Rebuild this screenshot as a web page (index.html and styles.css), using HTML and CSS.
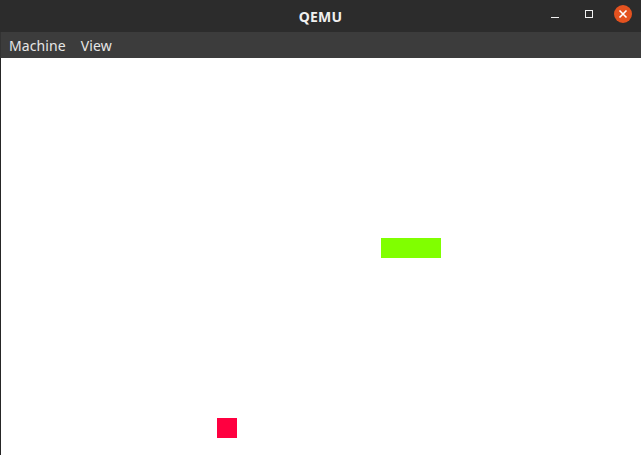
FILE: index.html
```html
<!DOCTYPE html>
<html>
<head>
<meta charset="utf-8">
<link rel="stylesheet" href="styles.css">
</head>
<body>
<div class="window">
  <header class="titlebar">
    <div class="title">QEMU</div>
    <div class="controls">
      <span class="ctl min"><svg width="10" height="10" viewBox="0 0 10 10"><rect x="1" y="7" width="8" height="1" fill="#f2f2f2"/></svg></span>
      <span class="ctl max"><svg width="10" height="10" viewBox="0 0 10 10"><rect x="1.5" y="1.5" width="7" height="7" fill="none" stroke="#f2f2f2" stroke-width="1"/></svg></span>
      <span class="ctl close"><svg width="18" height="18" viewBox="0 0 18 18"><circle cx="9" cy="9" r="9" fill="#e4521f"/><path d="M5.5 5.5 L12.5 12.5 M12.5 5.5 L5.5 12.5" stroke="#fff" stroke-width="1.6"/></svg></span>
    </div>
  </header>
  <nav class="menubar">
    <span class="menu">Machine</span>
    <span class="menu">View</span>
  </nav>
  <main class="screen">
    <div class="paddle"></div>
    <div class="ball"></div>
  </main>
</div>
</body>
</html>
```
FILE: styles.css
```css
html, body {
  margin: 0;
  padding: 0;
}
body {
  width: 641px;
  height: 455px;
  overflow: hidden;
  font-family: "Noto Sans", "Open Sans", sans-serif;
}
.window {
  display: flex;
  flex-direction: column;
  height: 455px;
}
.titlebar {
  height: 32px;
  background: #2c2c2c;
  display: flex;
  align-items: center;
  justify-content: center;
  position: relative;
  flex: none;
}
.title {
  color: #f0f0f0;
  font-weight: bold;
  font-size: 14px;
  letter-spacing: 0.2px;
}
.controls {
  position: absolute;
  right: 9px;
  top: 5px;
  display: flex;
  align-items: center;
  gap: 16px;
}
.ctl {
  display: flex;
  align-items: center;
  justify-content: center;
  width: 18px;
  height: 18px;
}
.min svg { margin-top: 2px; }
.menubar {
  height: 26px;
  background: #3c3c3c;
  display: flex;
  align-items: center;
  gap: 15px;
  padding-left: 8px;
  flex: none;
  border-left: 1px solid #323232;
}
.menu {
  color: #e6e6e6;
  font-size: 14px;
  letter-spacing: 0.1px;
}
.screen {
  flex: 1;
  background: #ffffff;
  position: relative;
  border-left: 1px solid #262626;
}
.paddle {
  position: absolute;
  left: 380px;
  top: 180px;
  width: 60px;
  height: 20px;
  background: #80ff00;
}
.ball {
  position: absolute;
  left: 216px;
  top: 360px;
  width: 20px;
  height: 20px;
  background: #ff0040;
}
```
